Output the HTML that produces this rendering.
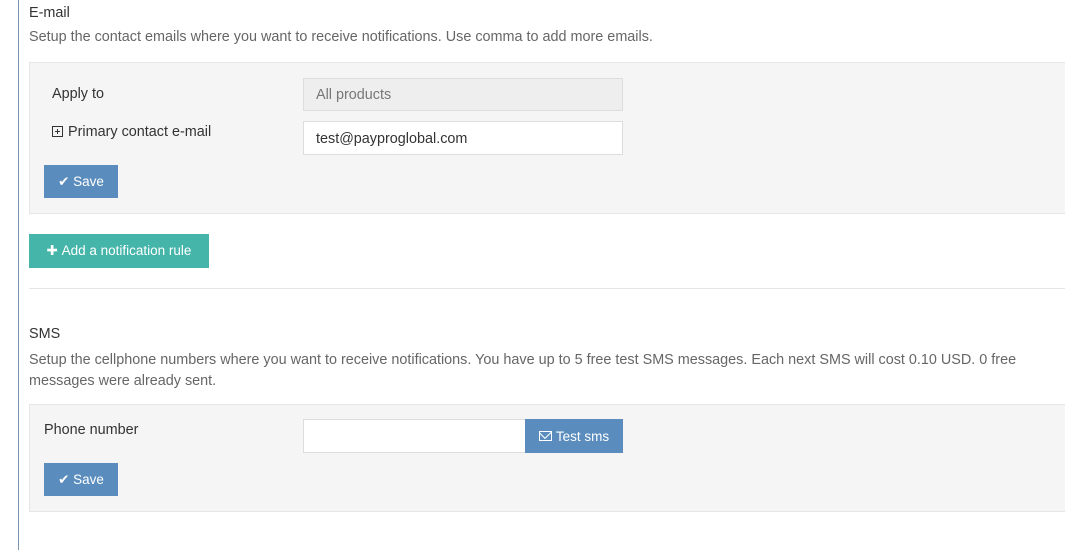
<html><head><style>
body{margin:0;width:1065px;height:550px;background:#fff;font-family:"Liberation Sans",sans-serif;font-size:14.4px;color:#333;position:relative;overflow:hidden}
.a{position:absolute;white-space:nowrap}
.vl{position:absolute;left:18px;top:0;width:1px;height:550px;background:#7a93b0}
.pan{position:absolute;left:29px;right:-2px;background:#f5f5f5;border:1px solid #e6e6e6}
.btn{position:absolute;color:#fff;font-size:13.5px;display:flex;align-items:center;justify-content:center}
.inp{position:absolute;border:1px solid #ddd;background:#fff;box-sizing:border-box;padding-left:12px;display:flex;align-items:center}
.g{color:#666}
</style></head><body>
<div class="vl"></div>
<div class="a" style="left:29px;top:5px">E-mail</div>
<div class="a g" style="left:29px;top:29px">Setup the contact emails where you want to receive notifications. Use comma to add more emails.</div>
<div class="pan" style="top:62px;height:150px"></div>
<div class="a" style="left:52px;top:86px">Apply to</div>
<div class="inp" style="left:303px;top:78px;width:320px;height:33px;background:#eee;color:#777">All products</div>
<div class="a" style="left:52px;top:124px"><span style="display:inline-block;width:9px;height:9px;border:1px solid #333;vertical-align:-1px;position:relative;margin-right:5px"><span style="position:absolute;left:2px;top:4px;width:5px;height:1px;background:#333"></span><span style="position:absolute;left:4px;top:2px;width:1px;height:5px;background:#333"></span></span>Primary contact e-mail</div>
<div class="inp" style="left:303px;top:121px;width:320px;height:34px;padding-top:1px">test@payproglobal.com</div>
<div class="btn" style="left:44px;top:165px;width:74px;height:33px;background:#5a8dbd">✔&nbsp;Save</div>
<div class="btn" style="left:29px;top:234px;width:180px;height:34px;background:#45b5aa">✚&nbsp;Add a notification rule</div>
<div class="a" style="left:29px;top:288px;width:1036px;height:1px;background:#e6e6e6"></div>
<div class="a" style="left:29px;top:326px">SMS</div>
<div class="a g" style="left:29px;top:350px;line-height:21px">Setup the cellphone numbers where you want to receive notifications. You have up to 5 free test SMS messages. Each next SMS will cost 0.10 USD. 0 free<br>messages were already sent.</div>
<div class="pan" style="top:404px;height:106px"></div>
<div class="a" style="left:44px;top:422px">Phone number</div>
<div class="inp" style="left:303px;top:419px;width:223px;height:34px"></div>
<div class="btn" style="left:525px;top:419px;width:98px;height:34px;background:#5a8dbd"><span style="display:inline-block;width:11px;height:8px;border:1.5px solid #fff;margin-right:4px;position:relative;overflow:hidden"><span style="position:absolute;left:0px;top:-5px;width:8px;height:8px;border:1.5px solid #fff;transform:rotate(45deg)"></span></span>Test sms</div>
<div class="btn" style="left:44px;top:463px;width:74px;height:33px;background:#5a8dbd">✔&nbsp;Save</div>
</body></html>
